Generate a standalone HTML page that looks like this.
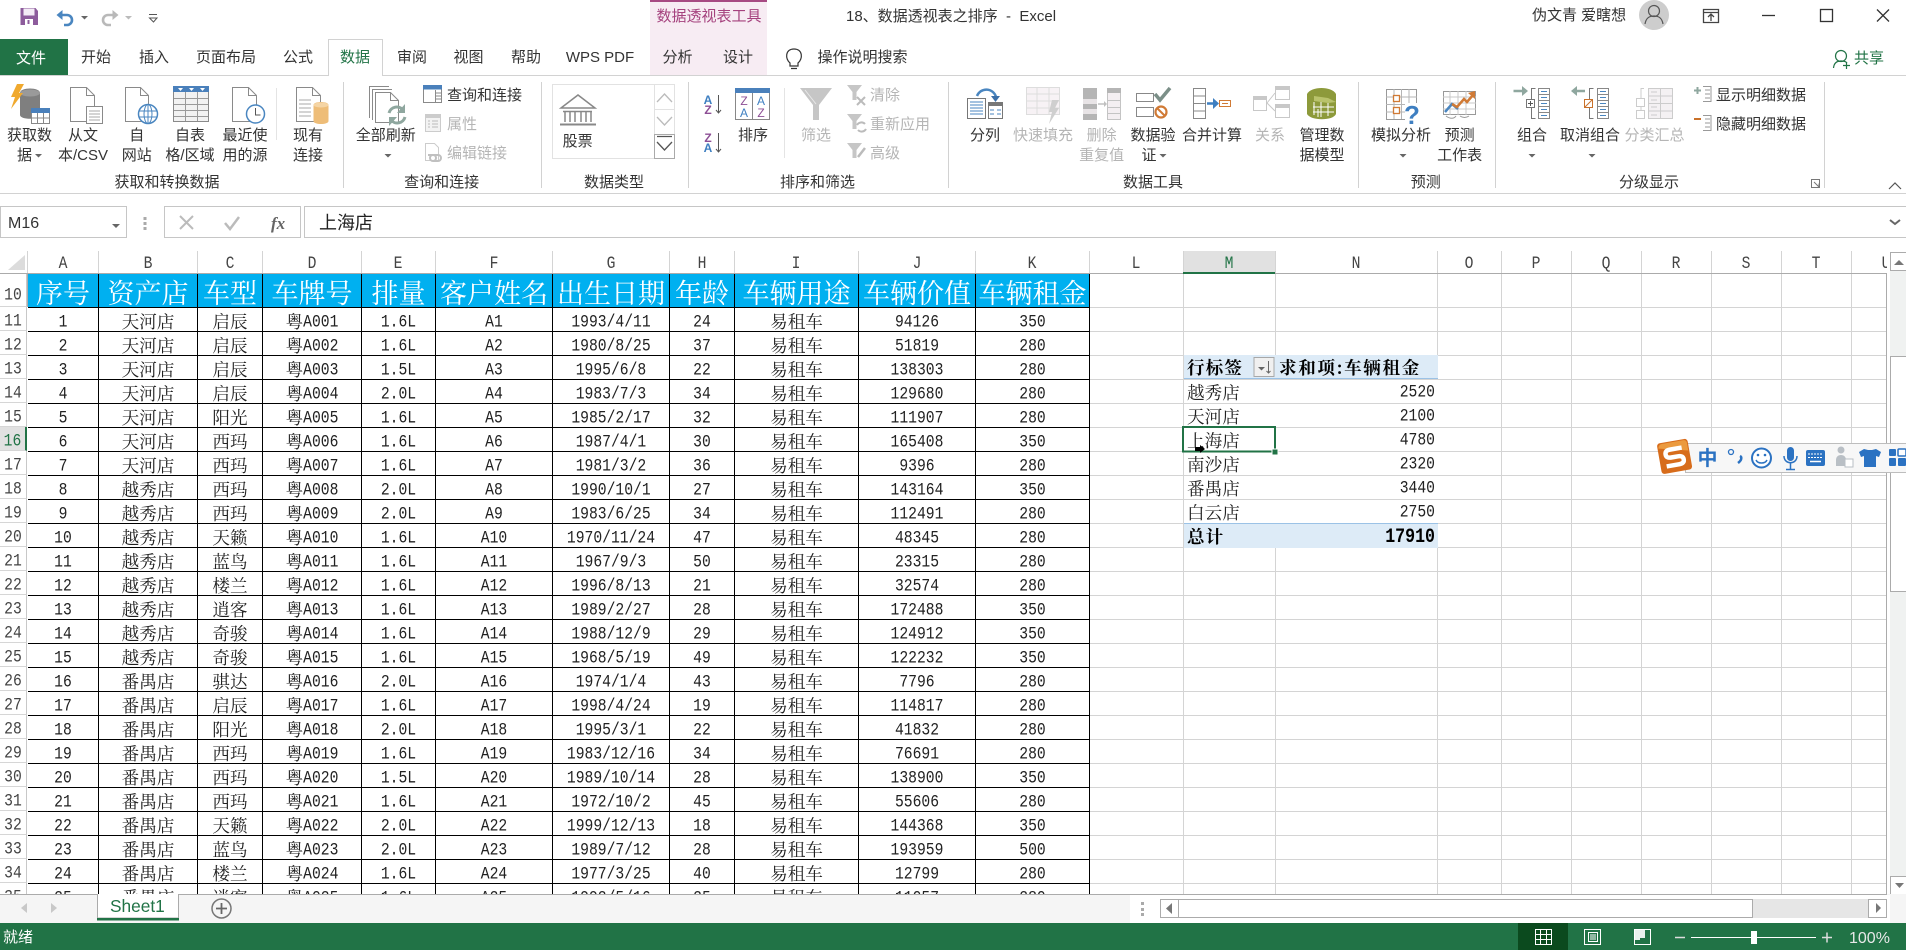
<!DOCTYPE html>
<html lang="zh"><head><meta charset="utf-8"><title>18、数据透视表之排序 - Excel</title>
<style>
html,body{margin:0;padding:0;background:#fff;width:1906px;height:950px;overflow:hidden}
#s{position:absolute;left:28px;top:273px;width:1062px;height:621px;overflow:hidden}
table{border-collapse:separate;border-spacing:0;table-layout:fixed;width:1062px;font-family:"Noto Serif CJK SC","Liberation Serif",serif;font-size:17.6px;color:#222}
td{box-sizing:border-box;height:24px;line-height:20px;padding:3px 0 0;border-right:1px solid #000;border-bottom:1px solid #000;text-align:center;white-space:nowrap;overflow:hidden}
tr.h td{height:34px;line-height:30px;padding:4px 0 0;background:#00B0F0;color:#fff;font-size:27px}
td span{position:relative;top:1px}
u{text-decoration:none;display:inline-block;vertical-align:top;height:20px;line-height:20px;position:relative;top:2px;font-family:"Liberation Mono",monospace;font-size:14.7px;transform:scaleY(1.22)}
.mono{display:inline-block;font-family:"Liberation Mono",monospace;font-size:14.7px;transform:scaleY(1.22);line-height:20px}
#rh{position:absolute;left:0;top:273px;width:27px;height:621px;overflow:hidden;font-family:"Liberation Mono",monospace;font-size:14.7px;color:#444}
#rh div{height:23px;line-height:25px;border-bottom:1px solid #d6d6d6;border-right:1px solid #c8c8c8;text-align:center;box-sizing:content-box;width:26px}
#rh div span{display:inline-block;transform:scaleY(1.22);position:relative;top:3px}
.p{position:absolute;height:24px;line-height:25px;font-family:"Noto Serif CJK SC","Liberation Serif",serif;font-size:17.6px;color:#222;white-space:nowrap;box-sizing:border-box}
.w{background:#fff;border-bottom:1px solid #d4d4d4}
.b{background:#DDEBF7;color:#000;font-weight:700}
svg text{font-family:"Liberation Sans","Noto Sans CJK SC",sans-serif;font-size:15px;fill:#333}
svg .g{fill:#b5b5b5}
</style></head><body>

<svg style="position:absolute;left:0;top:0" width="1906" height="950">
<path stroke="#d4d4d4" stroke-width="1" fill="none" d="M1089 307.5H1887M1089 331.5H1887M1089 355.5H1887M1089 379.5H1887M1089 403.5H1887M1089 427.5H1887M1089 451.5H1887M1089 475.5H1887M1089 499.5H1887M1089 523.5H1887M1089 547.5H1887M1089 571.5H1887M1089 595.5H1887M1089 619.5H1887M1089 643.5H1887M1089 667.5H1887M1089 691.5H1887M1089 715.5H1887M1089 739.5H1887M1089 763.5H1887M1089 787.5H1887M1089 811.5H1887M1089 835.5H1887M1089 859.5H1887M1089 883.5H1887M1183.5 273V894M1275.5 273V894M1437.5 273V894M1501.5 273V894M1571.5 273V894M1641.5 273V894M1711.5 273V894M1781.5 273V894M1851.5 273V894"/>
</svg>

<div id="rh"><div style="height:33px;line-height:40px"><span>10</span></div><div><span>11</span></div><div><span>12</span></div><div><span>13</span></div><div><span>14</span></div><div><span>15</span></div><div style="background:#e1e1e1;color:#217346;border-right:2px solid #217346;width:25px"><span>16</span></div><div><span>17</span></div><div><span>18</span></div><div><span>19</span></div><div><span>20</span></div><div><span>21</span></div><div><span>22</span></div><div><span>23</span></div><div><span>24</span></div><div><span>25</span></div><div><span>26</span></div><div><span>27</span></div><div><span>28</span></div><div><span>29</span></div><div><span>30</span></div><div><span>31</span></div><div><span>32</span></div><div><span>33</span></div><div><span>34</span></div><div><span>35</span></div></div>

<div id="s"><table>
<colgroup><col style="width:71px"><col style="width:99px"><col style="width:65px"><col style="width:99px"><col style="width:74px"><col style="width:117px"><col style="width:117px"><col style="width:65px"><col style="width:124px"><col style="width:117px"><col style="width:114px"></colgroup>
<tr class="h"><td>序号</td><td>资产店</td><td>车型</td><td>车牌号</td><td>排量</td><td>客户姓名</td><td>出生日期</td><td>年龄</td><td>车辆用途</td><td>车辆价值</td><td>车辆租金</td></tr>
<tr><td><u>1</u></td><td><span>天河店</span></td><td><span>启辰</span></td><td><span>粤</span><u>A001</u></td><td><u>1.6L</u></td><td><u>A1</u></td><td><u>1993/4/11</u></td><td><u>24</u></td><td><span>易租车</span></td><td><u>94126</u></td><td><u>350</u></td></tr>
<tr><td><u>2</u></td><td><span>天河店</span></td><td><span>启辰</span></td><td><span>粤</span><u>A002</u></td><td><u>1.6L</u></td><td><u>A2</u></td><td><u>1980/8/25</u></td><td><u>37</u></td><td><span>易租车</span></td><td><u>51819</u></td><td><u>280</u></td></tr>
<tr><td><u>3</u></td><td><span>天河店</span></td><td><span>启辰</span></td><td><span>粤</span><u>A003</u></td><td><u>1.5L</u></td><td><u>A3</u></td><td><u>1995/6/8</u></td><td><u>22</u></td><td><span>易租车</span></td><td><u>138303</u></td><td><u>280</u></td></tr>
<tr><td><u>4</u></td><td><span>天河店</span></td><td><span>启辰</span></td><td><span>粤</span><u>A004</u></td><td><u>2.0L</u></td><td><u>A4</u></td><td><u>1983/7/3</u></td><td><u>34</u></td><td><span>易租车</span></td><td><u>129680</u></td><td><u>280</u></td></tr>
<tr><td><u>5</u></td><td><span>天河店</span></td><td><span>阳光</span></td><td><span>粤</span><u>A005</u></td><td><u>1.6L</u></td><td><u>A5</u></td><td><u>1985/2/17</u></td><td><u>32</u></td><td><span>易租车</span></td><td><u>111907</u></td><td><u>280</u></td></tr>
<tr><td><u>6</u></td><td><span>天河店</span></td><td><span>西玛</span></td><td><span>粤</span><u>A006</u></td><td><u>1.6L</u></td><td><u>A6</u></td><td><u>1987/4/1</u></td><td><u>30</u></td><td><span>易租车</span></td><td><u>165408</u></td><td><u>350</u></td></tr>
<tr><td><u>7</u></td><td><span>天河店</span></td><td><span>西玛</span></td><td><span>粤</span><u>A007</u></td><td><u>1.6L</u></td><td><u>A7</u></td><td><u>1981/3/2</u></td><td><u>36</u></td><td><span>易租车</span></td><td><u>9396</u></td><td><u>280</u></td></tr>
<tr><td><u>8</u></td><td><span>越秀店</span></td><td><span>西玛</span></td><td><span>粤</span><u>A008</u></td><td><u>2.0L</u></td><td><u>A8</u></td><td><u>1990/10/1</u></td><td><u>27</u></td><td><span>易租车</span></td><td><u>143164</u></td><td><u>350</u></td></tr>
<tr><td><u>9</u></td><td><span>越秀店</span></td><td><span>西玛</span></td><td><span>粤</span><u>A009</u></td><td><u>2.0L</u></td><td><u>A9</u></td><td><u>1983/6/25</u></td><td><u>34</u></td><td><span>易租车</span></td><td><u>112491</u></td><td><u>280</u></td></tr>
<tr><td><u>10</u></td><td><span>越秀店</span></td><td><span>天籁</span></td><td><span>粤</span><u>A010</u></td><td><u>1.6L</u></td><td><u>A10</u></td><td><u>1970/11/24</u></td><td><u>47</u></td><td><span>易租车</span></td><td><u>48345</u></td><td><u>280</u></td></tr>
<tr><td><u>11</u></td><td><span>越秀店</span></td><td><span>蓝鸟</span></td><td><span>粤</span><u>A011</u></td><td><u>1.6L</u></td><td><u>A11</u></td><td><u>1967/9/3</u></td><td><u>50</u></td><td><span>易租车</span></td><td><u>23315</u></td><td><u>280</u></td></tr>
<tr><td><u>12</u></td><td><span>越秀店</span></td><td><span>楼兰</span></td><td><span>粤</span><u>A012</u></td><td><u>1.6L</u></td><td><u>A12</u></td><td><u>1996/8/13</u></td><td><u>21</u></td><td><span>易租车</span></td><td><u>32574</u></td><td><u>280</u></td></tr>
<tr><td><u>13</u></td><td><span>越秀店</span></td><td><span>逍客</span></td><td><span>粤</span><u>A013</u></td><td><u>1.6L</u></td><td><u>A13</u></td><td><u>1989/2/27</u></td><td><u>28</u></td><td><span>易租车</span></td><td><u>172488</u></td><td><u>350</u></td></tr>
<tr><td><u>14</u></td><td><span>越秀店</span></td><td><span>奇骏</span></td><td><span>粤</span><u>A014</u></td><td><u>1.6L</u></td><td><u>A14</u></td><td><u>1988/12/9</u></td><td><u>29</u></td><td><span>易租车</span></td><td><u>124912</u></td><td><u>350</u></td></tr>
<tr><td><u>15</u></td><td><span>越秀店</span></td><td><span>奇骏</span></td><td><span>粤</span><u>A015</u></td><td><u>1.6L</u></td><td><u>A15</u></td><td><u>1968/5/19</u></td><td><u>49</u></td><td><span>易租车</span></td><td><u>122232</u></td><td><u>350</u></td></tr>
<tr><td><u>16</u></td><td><span>番禺店</span></td><td><span>骐达</span></td><td><span>粤</span><u>A016</u></td><td><u>2.0L</u></td><td><u>A16</u></td><td><u>1974/1/4</u></td><td><u>43</u></td><td><span>易租车</span></td><td><u>7796</u></td><td><u>280</u></td></tr>
<tr><td><u>17</u></td><td><span>番禺店</span></td><td><span>启辰</span></td><td><span>粤</span><u>A017</u></td><td><u>1.6L</u></td><td><u>A17</u></td><td><u>1998/4/24</u></td><td><u>19</u></td><td><span>易租车</span></td><td><u>114817</u></td><td><u>280</u></td></tr>
<tr><td><u>18</u></td><td><span>番禺店</span></td><td><span>阳光</span></td><td><span>粤</span><u>A018</u></td><td><u>2.0L</u></td><td><u>A18</u></td><td><u>1995/3/1</u></td><td><u>22</u></td><td><span>易租车</span></td><td><u>41832</u></td><td><u>280</u></td></tr>
<tr><td><u>19</u></td><td><span>番禺店</span></td><td><span>西玛</span></td><td><span>粤</span><u>A019</u></td><td><u>1.6L</u></td><td><u>A19</u></td><td><u>1983/12/16</u></td><td><u>34</u></td><td><span>易租车</span></td><td><u>76691</u></td><td><u>280</u></td></tr>
<tr><td><u>20</u></td><td><span>番禺店</span></td><td><span>西玛</span></td><td><span>粤</span><u>A020</u></td><td><u>1.5L</u></td><td><u>A20</u></td><td><u>1989/10/14</u></td><td><u>28</u></td><td><span>易租车</span></td><td><u>138900</u></td><td><u>350</u></td></tr>
<tr><td><u>21</u></td><td><span>番禺店</span></td><td><span>西玛</span></td><td><span>粤</span><u>A021</u></td><td><u>1.6L</u></td><td><u>A21</u></td><td><u>1972/10/2</u></td><td><u>45</u></td><td><span>易租车</span></td><td><u>55606</u></td><td><u>280</u></td></tr>
<tr><td><u>22</u></td><td><span>番禺店</span></td><td><span>天籁</span></td><td><span>粤</span><u>A022</u></td><td><u>2.0L</u></td><td><u>A22</u></td><td><u>1999/12/13</u></td><td><u>18</u></td><td><span>易租车</span></td><td><u>144368</u></td><td><u>350</u></td></tr>
<tr><td><u>23</u></td><td><span>番禺店</span></td><td><span>蓝鸟</span></td><td><span>粤</span><u>A023</u></td><td><u>2.0L</u></td><td><u>A23</u></td><td><u>1989/7/12</u></td><td><u>28</u></td><td><span>易租车</span></td><td><u>193959</u></td><td><u>500</u></td></tr>
<tr><td><u>24</u></td><td><span>番禺店</span></td><td><span>楼兰</span></td><td><span>粤</span><u>A024</u></td><td><u>1.6L</u></td><td><u>A24</u></td><td><u>1977/3/25</u></td><td><u>40</u></td><td><span>易租车</span></td><td><u>12799</u></td><td><u>280</u></td></tr>
<tr><td><u>25</u></td><td><span>番禺店</span></td><td><span>逍客</span></td><td><span>粤</span><u>A025</u></td><td><u>1.6L</u></td><td><u>A25</u></td><td><u>1992/5/16</u></td><td><u>25</u></td><td><span>易租车</span></td><td><u>11057</u></td><td><u>280</u></td></tr>
</table></div>

<!-- pivot -->
<div class="p b" style="left:1184px;top:355px;width:92px;padding-left:3px;letter-spacing:1px;border-bottom:1px solid #9BC2E6">行标签</div>
<div class="p b" style="left:1276px;top:355px;width:162px;padding-left:3px;letter-spacing:1.6px;border-bottom:1px solid #9BC2E6">求和项:车辆租金</div>
<div class="p w" style="left:1184px;top:380px;width:254px;padding-left:3px">越秀店<span class="mono" style="position:absolute;right:3px;top:3px">2520</span></div>
<div class="p w" style="left:1184px;top:404px;width:254px;padding-left:3px">天河店<span class="mono" style="position:absolute;right:3px;top:3px">2100</span></div>
<div class="p w" style="left:1184px;top:428px;width:254px;padding-left:3px">上海店<span class="mono" style="position:absolute;right:3px;top:3px">4780</span></div>
<div class="p w" style="left:1184px;top:452px;width:254px;padding-left:3px">南沙店<span class="mono" style="position:absolute;right:3px;top:3px">2320</span></div>
<div class="p w" style="left:1184px;top:476px;width:254px;padding-left:3px">番禺店<span class="mono" style="position:absolute;right:3px;top:3px">3440</span></div>
<div class="p w" style="left:1184px;top:500px;width:254px;padding-left:3px">白云店<span class="mono" style="position:absolute;right:3px;top:3px">2750</span></div>
<div class="p b" style="left:1184px;top:523px;width:254px;height:25px;padding-left:3px;letter-spacing:1px;border-top:1px solid #9BC2E6">总计<span class="mono" style="position:absolute;right:3px;top:3px;font-weight:700;font-size:16.6px;letter-spacing:0">17910</span></div>

<svg style="position:absolute;left:0;top:0" width="1906" height="950" xmlns="http://www.w3.org/2000/svg">
<!-- pivot filter + selection -->
<rect x="1254" y="357.5" width="20" height="19" fill="#f0f0f0" stroke="#a8a8a8"/><path d="M1258 367h7l-3.500 3.500z" fill="#666"/><path d="M1268.500 361v12M1266.500 371l2 2 2-2" stroke="#666" fill="none"/>
<rect x="1183" y="427" width="92" height="24.500" fill="none" stroke="#217346" stroke-width="2"/><rect x="1272" y="449" width="6" height="6" fill="#217346" stroke="#fff"/>
<path d="M1195 447h5v-2l5 4-5 4v-2h-5z" fill="#000"/>

<!-- column headers -->
<rect x="0" y="250" width="1887" height="23" fill="#fff"/>
<path d="M25 255v15H8z" fill="#dcdcdc"/>
<rect x="1183" y="251" width="92" height="22" fill="#e1e1e1"/>
<path stroke="#d4d4d4" d="M27.500 251v22M98.500 251v22M197.500 251v22M262.500 251v22M361.500 251v22M435.500 251v22M552.500 251v22M669.500 251v22M734.500 251v22M858.500 251v22M975.500 251v22M1089.500 251v22M1183.500 251v22M1275.500 251v22M1437.500 251v22M1501.500 251v22M1571.500 251v22M1641.500 251v22M1711.500 251v22M1781.500 251v22M1851.500 251v22"/>
<path stroke="#ababab" d="M0 273.500H1183M1275 273.500H1887M1886.500 273V894M27.500 273V307"/>
<rect x="1183" y="272" width="92" height="2" fill="#217346"/>
<g text-anchor="middle" transform="translate(0,268) scale(1,1.22)">
<text x="63" y="0" style="font:14.7px 'Liberation Mono',monospace;fill:#444">A</text><text x="148" y="0" style="font:14.7px 'Liberation Mono',monospace;fill:#444">B</text><text x="230" y="0" style="font:14.7px 'Liberation Mono',monospace;fill:#444">C</text><text x="312" y="0" style="font:14.7px 'Liberation Mono',monospace;fill:#444">D</text><text x="398" y="0" style="font:14.7px 'Liberation Mono',monospace;fill:#444">E</text><text x="494" y="0" style="font:14.7px 'Liberation Mono',monospace;fill:#444">F</text><text x="611" y="0" style="font:14.7px 'Liberation Mono',monospace;fill:#444">G</text><text x="702" y="0" style="font:14.7px 'Liberation Mono',monospace;fill:#444">H</text><text x="796" y="0" style="font:14.7px 'Liberation Mono',monospace;fill:#444">I</text><text x="917" y="0" style="font:14.7px 'Liberation Mono',monospace;fill:#444">J</text><text x="1032" y="0" style="font:14.7px 'Liberation Mono',monospace;fill:#444">K</text><text x="1136" y="0" style="font:14.7px 'Liberation Mono',monospace;fill:#444">L</text><text x="1229" y="0" style="font:14.7px 'Liberation Mono',monospace;fill:#217346">M</text><text x="1356" y="0" style="font:14.7px 'Liberation Mono',monospace;fill:#444">N</text><text x="1469" y="0" style="font:14.7px 'Liberation Mono',monospace;fill:#444">O</text><text x="1536" y="0" style="font:14.7px 'Liberation Mono',monospace;fill:#444">P</text><text x="1606" y="0" style="font:14.7px 'Liberation Mono',monospace;fill:#444">Q</text><text x="1676" y="0" style="font:14.7px 'Liberation Mono',monospace;fill:#444">R</text><text x="1746" y="0" style="font:14.7px 'Liberation Mono',monospace;fill:#444">S</text><text x="1816" y="0" style="font:14.7px 'Liberation Mono',monospace;fill:#444">T</text><text x="1886" y="0" style="font:14.7px 'Liberation Mono',monospace;fill:#444">U</text>
</g>
<rect x="1887" y="250" width="19" height="24" fill="#fff"/>

<!-- right vertical scrollbar -->
<rect x="1890" y="270" width="16" height="606" fill="#f0f2f1"/>
<rect x="1890.500" y="252.500" width="16" height="18" fill="#fff" stroke="#ababab"/><path d="M1894 265l5-5 5 5z" fill="#777"/>
<rect x="1890.500" y="356.500" width="16" height="235" fill="#fff" stroke="#ababab"/>
<rect x="1890.500" y="876.500" width="16" height="18" fill="#fff" stroke="#ababab"/><path d="M1895 883h9l-4.500 5z" fill="#777"/>

<!-- sheet tabs / horizontal scrollbar -->
<rect x="0" y="894" width="1906" height="29" fill="#f5f5f5"/>
<path d="M0 894.500H1887" stroke="#ababab"/>
<path d="M27 903v10l-6-5z" fill="#c8c8c8"/><path d="M51 903v10l6-5z" fill="#c8c8c8"/>
<path d="M97.500 894v24h81v-24" fill="#fff" stroke="#ababab"/><rect x="97" y="918" width="82" height="2.500" fill="#217346"/>
<text x="110" y="912" style="font-size:17.300px;fill:#217346">Sheet1</text>
<circle cx="221.500" cy="908.500" r="9.500" fill="none" stroke="#777" stroke-width="1.500"/><path d="M216 908.500h11M221.500 903v11" stroke="#666" stroke-width="1.800"/>
<rect x="1130" y="895" width="757" height="28" fill="#fff"/><rect x="1120" y="895" width="10" height="28" fill="#f5f5f5"/>
<rect x="1141" y="902" width="3" height="3" fill="#aaa"/><rect x="1141" y="908" width="3" height="3" fill="#aaa"/><rect x="1141" y="913" width="3" height="3" fill="#aaa"/>
<rect x="1160.500" y="899.500" width="18" height="18" fill="#fff" stroke="#ababab"/><path d="M1172 903v11l-6-5.500z" fill="#777"/>
<rect x="1178.500" y="899.500" width="574" height="18" fill="#fff" stroke="#ababab"/><rect x="1753" y="899" width="115" height="19" fill="#e6e6e6"/>
<rect x="1868.500" y="899.500" width="18" height="18" fill="#fff" stroke="#ababab"/><path d="M1876 903v10l5-5z" fill="#777"/>
<rect x="1887" y="895" width="3" height="28" fill="#fff"/>

<!-- status bar -->
<rect x="0" y="923" width="1906" height="27" fill="#217346"/>
<text x="3" y="942" style="fill:#fff;font-size:15px">就绪</text>
<rect x="1518" y="923" width="50" height="27" fill="#0b4a1e"/>
<path fill="none" stroke="#fff" d="M1535.500 929.500h16v15h-16zM1535.500 934.500h16M1535.500 939.500h16M1540.500 929.500v15M1546.500 929.500v15"/>
<path fill="none" stroke="#fff" d="M1584.500 929.500h16v15h-16zM1588.500 932.500h9v9h-9zM1590 935h6M1590 937h6M1590 939h6"/>
<path fill="none" stroke="#fff" d="M1634.500 929.500h16v15h-16z"/><path fill="#fff" d="M1635 930h5v10h-5zM1640 930h5v8h-5z" opacity=".9"/>
<path stroke="#ddd" stroke-width="1.500" d="M1675 937.500h10"/><path stroke="#fff" d="M1691 937.500h125"/><rect x="1751" y="931" width="6" height="13" fill="#fff"/><path stroke="#ddd" stroke-width="1.500" d="M1822 937.500h10M1827 932.500v10"/>
<text x="1849" y="943" style="fill:#e8e8e8;font-size:16px">100%</text>

<!-- title / context tab -->
<rect x="650" y="0" width="117" height="76" fill="#f7ecf3"/><rect x="650" y="0" width="117" height="2" fill="#a74a83"/>
<text x="709" y="21" text-anchor="middle" style="fill:#a5427e">数据透视表工具</text>
<text x="846" y="21">18、数据透视表之排序&#160;&#160;-&#160;&#160;Excel</text>
<text x="1532" y="20">伪文青 爱瞎想</text>
<circle cx="1654" cy="15" r="15" fill="#cdcdcd"/><circle cx="1654" cy="11" r="5.500" fill="none" stroke="#555" stroke-width="1.200"/><path d="M1645 24c1-6 4-8 9-8s8 2 9 8" fill="none" stroke="#555" stroke-width="1.200"/>
<path fill="none" stroke="#444" stroke-width="1.300" d="M1703.500 9.500h15v13h-15zM1703.500 12.500h15M1711 21v-6M1708 17l3-3 3 3"/>
<path stroke="#333" stroke-width="1.300" d="M1762 15.500h13"/><rect x="1820.500" y="9.500" width="12" height="12" fill="none" stroke="#333" stroke-width="1.300"/><path stroke="#333" stroke-width="1.300" d="M1877 9.500l12 12M1889 9.500l-12 12"/>

<!-- QAT -->
<path fill="#8d5c9c" d="M20.500 8h15l2.500 3v14H20.500z"/><rect x="23.500" y="8.500" width="11" height="7" fill="#f4ecf6"/><rect x="25" y="19" width="8" height="6" fill="#fff"/><rect x="27.500" y="20" width="2" height="4" fill="#8d5c9c"/>
<path fill="none" stroke="#4a86c0" stroke-width="2.600" d="M60 15h7a5 5 0 0 1 0 10h-3"/><path d="M56.500 15l6-5v10z" fill="#4a86c0"/><path d="M81 16h7l-3.500 3.500z" fill="#666"/>
<path fill="none" stroke="#b9b9b9" stroke-width="2.600" d="M115 15h-7a5 5 0 0 0 0 10h3"/><path d="M118.500 15l-6-5v10z" fill="#b9b9b9"/><path d="M125 16h7l-3.500 3.500z" fill="#bbb"/>
<path d="M149 14.500h8M149.500 18h7.500l-3.500 4z" fill="none" stroke="#555"/>

<!-- tabs -->
<rect x="0" y="39" width="68" height="37" fill="#217346"/>
<text x="31" y="63" text-anchor="middle" style="fill:#fff">文件</text>
<path d="M0 75.500H328.500V39.500H382.500V75.500H1906" fill="none" stroke="#d2d2d2"/><rect x="329" y="74" width="53" height="3" fill="#fff"/>
<g text-anchor="middle">
<text x="96" y="62">开始</text><text x="154" y="62">插入</text><text x="226" y="62">页面布局</text><text x="298" y="62">公式</text>
<text x="355" y="62" style="fill:#217346">数据</text><text x="412" y="62">审阅</text><text x="468.500" y="62">视图</text><text x="526" y="62">帮助</text><text x="600" y="62">WPS PDF</text><text x="677.500" y="62">分析</text><text x="738" y="62">设计</text>
</g>
<path fill="none" stroke="#333" stroke-width="1.200" d="M790 66v-3c-5-4-5-14 4-14s9 10 4 14v3zM791 68.500h6"/>
<text x="817.500" y="62">操作说明搜索</text>
<circle cx="1841" cy="56" r="5.500" fill="none" stroke="#217346" stroke-width="1.200"/><path fill="none" stroke="#217346" stroke-width="1.200" d="M1833.500 68c.5-5 3-7 7.500-7s5 1 6 2M1846.500 62v7M1843 65.500h7"/>
<text x="1854" y="63" style="fill:#217346">共享</text>

<!-- ribbon frame -->
<path stroke="#d2d2d2" d="M0 193.500H1906M343.500 82v106M541.500 82v106M688.500 82v106M948.500 82v106M1358.500 82v106M1495.500 82v106M1824.500 82v106"/><path stroke="#e4e4e4" d="M276.500 88v52M784.500 88v70"/>

<!-- data type box (before text) -->
<rect x="552.500" y="84.500" width="122" height="74" fill="#fff" stroke="#e2e2e2"/>

<!-- ribbon text -->
<g text-anchor="middle">
<text x="29.500" y="140">获取数</text><text x="24.500" y="160">据</text><text x="83" y="140">从文</text><text x="83" y="160">本/CSV</text><text x="136.700" y="140">自</text><text x="136.700" y="160">网站</text><text x="190" y="140">自表</text><text x="190" y="160">格/区域</text><text x="245" y="140">最近使</text><text x="245" y="160">用的源</text><text x="308" y="140">现有</text><text x="308" y="160">连接</text>
<text x="385.700" y="140">全部刷新</text><text x="577.600" y="146">股票</text><text x="753" y="140">排序</text><text x="816" y="140" class="g">筛选</text>
<text x="985" y="140">分列</text><text x="1043" y="140" class="g">快速填充</text><text x="1101.600" y="140" class="g">删除</text><text x="1101.600" y="160" class="g">重复值</text><text x="1153" y="140">数据验</text><text x="1149" y="160">证</text><text x="1212" y="140">合并计算</text><text x="1270" y="140" class="g">关系</text><text x="1322" y="140">管理数</text><text x="1322" y="160">据模型</text>
<text x="1401" y="140">模拟分析</text><text x="1459.600" y="140">预测</text><text x="1459.600" y="160">工作表</text><text x="1532" y="140">组合</text><text x="1590" y="140">取消组合</text><text x="1654.500" y="140" class="g">分类汇总</text>
<text x="167" y="187">获取和转换数据</text><text x="441.600" y="187">查询和连接</text><text x="614" y="187">数据类型</text><text x="817.500" y="187">排序和筛选</text><text x="1153" y="187">数据工具</text><text x="1425.700" y="187">预测</text><text x="1649" y="187">分级显示</text>
</g>
<text x="447" y="100">查询和连接</text><text x="447" y="129" class="g">属性</text><text x="447" y="158" class="g">编辑链接</text>
<text x="870" y="100" class="g">清除</text><text x="870" y="129" class="g">重新应用</text><text x="870" y="158" class="g">高级</text>
<text x="1716" y="100">显示明细数据</text><text x="1716" y="129">隐藏明细数据</text>
<path fill="#666" d="M35 154h7l-3.500 3.500zM384.500 154h7l-3.500 3.500zM1159.500 154h7l-3.500 3.500zM1399.500 154h7l-3.500 3.500zM1528.500 154h7l-3.500 3.500zM1588.500 154h7l-3.500 3.500z"/>
<path fill="none" stroke="#777" d="M1811.500 179.500h8v8h-8zM1814 182l5 5M1819 183.500v4h-4"/>
<path fill="none" stroke="#555" stroke-width="1.200" d="M1889 189l6-6 6 6"/>

<!-- ribbon icons -->
<g fill="none">
<!-- get data -->
<path d="M20 93c0-6 20-6 20 0v22c0 5-20 5-20 0z" fill="#7f7f7f"/><ellipse cx="30" cy="93" rx="10" ry="3.500" fill="#9a9a9a"/>
<path d="M17 84h7l-5 9h4l-12 16 4-12H11z" fill="#f0a92e"/>
<rect x="31.500" y="108.500" width="18" height="15" fill="#fff" stroke="#888"/><rect x="31" y="108" width="19" height="5" fill="#4a80bb"/><path stroke="#888" d="M37.500 113v10M43.500 113v10M32 118h17"/>
<!-- from text -->
<path stroke="#8a8a8a" fill="#fff" d="M70.500 87.500h16l8 8v26h-24zM86.500 87.500v8h8"/><rect x="86.500" y="106.500" width="16" height="17" fill="#fff" stroke="#8a8a8a"/><path stroke="#aaa" d="M89 111h11M89 114h11M89 117h11M89 120h11"/>
<!-- web -->
<path stroke="#8a8a8a" fill="#fff" d="M125.500 87.500h15l8 8v26h-23zM140.500 87.500v8h8"/><circle cx="148" cy="114" r="9.500" fill="#fff" stroke="#4a86c0" stroke-width="1.500"/><ellipse cx="148" cy="114" rx="4" ry="9.500" stroke="#4a86c0"/><path stroke="#4a86c0" d="M139 111h18M139 117h18M148 105v18"/>
<!-- table -->
<rect x="173.500" y="86.500" width="35" height="35" fill="#f2f2f2" stroke="#8a8a8a"/><rect x="173" y="86" width="36" height="6" fill="#4a80bb"/><path stroke="#9a9a9a" d="M185.500 92v29M197.500 92v29M174 98.500h34M174 104.500h34M174 110.500h34M174 116.500h34"/><path fill="#fff" d="M178 88h5l-2.500 3zM189 88h5l-2.500 3zM200 88h5l-2.500 3z"/>
<!-- recent -->
<path stroke="#8a8a8a" fill="#fff" d="M232.500 87.500h16l8 8v26h-24zM248.500 87.500v8h8"/><circle cx="255.500" cy="114" r="9" fill="#fff" stroke="#4a86c0" stroke-width="1.500"/><path stroke="#555" d="M255.500 108v7h5"/>
<!-- existing -->
<path stroke="#8a8a8a" fill="#fff" d="M296.500 87.500h16l8 8v26h-24zM312.500 87.500v8h8"/><path stroke="#aaa" d="M299 100h12M299 104h12M299 108h12M299 112h12M299 116h12"/><path d="M313.500 105c0-4 15-4 15 0v16c0 4-15 4-15 0z" fill="#eebd78"/><ellipse cx="321" cy="105" rx="7.500" ry="2.500" fill="#f5d5a5"/>
<!-- refresh all -->
<path stroke="#8a8a8a" d="M369.500 118V86.500H389M372.500 120V89.500H392M375.500 92.500h15l8 8v22h-23z" fill="#fff"/><path stroke="#8a8a8a" d="M390.500 92.500v8h8"/>
<path stroke="#8fa79f" stroke-width="3" d="M389 113a8 8 0 0 1 14-3M405 117a8 8 0 0 1-14 3"/><path fill="#8fa79f" d="M405 104v9h-8zM389 126v-9h8z"/>
<!-- small queries -->
<rect x="423.500" y="85.500" width="18" height="17" fill="#fff" stroke="#8a8a8a"/><rect x="423" y="85" width="19" height="4.500" fill="#4a80bb"/><path stroke="#8a8a8a" d="M435.500 90v12M436 93h5M436 96h5M436 99h5"/>
<rect x="425.500" y="114.500" width="15" height="17" fill="#f3f3f3" stroke="#ccc"/><rect x="425" y="114" width="16" height="4" fill="#ccc"/><path stroke="#bbb" d="M428 121h2M432 121h6M428 124h2M432 124h6M428 127h2M432 127h6"/>
<path stroke="#ccc" fill="#fff" d="M425.500 143.500h9l4 4v13h-13z"/><path stroke="#c0c0c0" stroke-width="2" d="M433 155h5a3 3 0 0 1 0 6h-5a3 3 0 0 1 0-6M428 155h5a3 3 0 0 1 0 6"/>
<!-- stock bank -->
<path stroke="#888" stroke-width="1.500" d="M561 108l17-13 17 13z"/><path stroke="#888" stroke-width="1.500" d="M563 111.500h29M565 112v10M570 112v10M575 112v10M581 112v10M586 112v10M591 112v10"/><path stroke="#888" stroke-width="2" d="M560 124.500h36"/>
<rect x="654.500" y="84.500" width="20" height="25" fill="#fff" stroke="#e2e2e2"/><rect x="654.500" y="109.500" width="20" height="25" fill="#fff" stroke="#e2e2e2"/><rect x="654.500" y="134.500" width="20" height="24" fill="#fff" stroke="#aaa"/>
<path stroke="#bbb" stroke-width="1.300" d="M657 102l7.500-8 7.500 8M657 117l7.500 8 7.500-8"/><path stroke="#555" stroke-width="1.300" d="M657 136.500h15M657 142l7.500 8 7.500-8"/>
<!-- sort -->
<path stroke="#555" d="M718.500 95v18M716 110l2.500 3 2.500-3M718.500 133v19M716 149l2.500 3 2.500-3"/>
<rect x="735.500" y="88.500" width="34" height="31" fill="#fff" stroke="#888"/><rect x="735" y="88" width="35" height="5" fill="#4a80bb"/><path stroke="#888" d="M752.500 93v26"/>
<!-- filter -->
<path d="M800 88h32l-13 17v15h-6v-15z" fill="#c6c6c6"/><path d="M805 90l11 14" stroke="#e8e8e8"/>
<path d="M847 85h15l-5.500 7v8h-4v-8z" fill="#c6c6c6"/><path stroke="#bbb" stroke-width="2" d="M857 97l8 8M865 97l-8 8"/>
<path d="M847 114h15l-5.500 7v8h-4v-8z" fill="#c6c6c6"/><path stroke="#bbb" stroke-width="2" d="M857 125a5 5 0 0 1 8-1M866 129a5 5 0 0 1-8 1"/>
<path d="M847 143h15l-5.500 7v8h-4v-8z" fill="#c6c6c6"/><path stroke="#bbb" stroke-width="2.500" d="M865 148l-7 9"/>
<!-- text to columns -->
<path stroke="#4a86c0" stroke-width="2.500" d="M977 96a10 10 0 0 1 19 1"/><path fill="#3b6fa8" d="M991 96h9l-4.500 6z"/>
<rect x="967.500" y="98.500" width="18" height="20" fill="#fff" stroke="#777"/><path stroke="#4a86c0" d="M970 102h13M970 105h13M970 108h13M970 111h13M970 114h13"/>
<rect x="988.500" y="102.500" width="14" height="16" fill="#fff" stroke="#777"/><rect x="988" y="102" width="15" height="4" fill="#777"/><path stroke="#4a86c0" d="M990 110h4M997 110h4M990 114h4M997 114h4"/>
<!-- flash fill -->
<rect x="1026.500" y="87.500" width="33" height="27" fill="#f7f2f5" stroke="#ddd"/><path stroke="#ddd" d="M1026 94h34M1026 101h34M1026 108h34M1037 87v28M1049 87v28"/><path d="M1052 100h7l-4 8h4l-10 16 3-12h-3z" fill="#cfcfcf"/>
<!-- remove dup -->
<rect x="1083" y="88" width="14" height="32" fill="#b5b5b5"/><path fill="#e8e4e6" d="M1083 99h14v5h-14zM1083 109h14v5h-14z"/>
<rect x="1107.500" y="88.500" width="13" height="31" fill="#f4eff2" stroke="#c4c4c4"/><rect x="1107" y="88" width="14" height="5" fill="#b5b5b5"/><path stroke="#c4c4c4" d="M1107 100.500h14M1107 107.500h14M1107 113.500h14"/>
<path stroke="#c0c0c0" stroke-width="1.500" d="M1098 104h7"/><path fill="#c0c0c0" d="M1104 101v6l3-3z"/>
<!-- validation -->
<rect x="1136.500" y="93.500" width="17" height="8" fill="#fff" stroke="#888"/><rect x="1136.500" y="107.500" width="17" height="9" fill="#fff" stroke="#888"/><path stroke="#7b8f88" stroke-width="3.500" d="M1155 94l5 6 10-12"/><circle cx="1161" cy="112" r="5.500" fill="#fff" stroke="#d07a35" stroke-width="2.200"/><path stroke="#d07a35" stroke-width="2" d="M1157 108l8 8"/>
<!-- consolidate -->
<rect x="1193.500" y="88.500" width="12" height="30" fill="#fff" stroke="#888"/><path stroke="#888" d="M1193 96h13M1193 103.500h13M1193 111h13"/><path stroke="#3e7fc1" stroke-width="2.500" d="M1207 103.500h7"/><path fill="#3e7fc1" d="M1213 98v11l6-5.500z"/><rect x="1219.500" y="100.500" width="11" height="6" fill="#fff" stroke="#d07a35"/><path stroke="#d07a35" d="M1222 103.500h6"/>
<!-- relationships -->
<rect x="1253.500" y="96.500" width="13" height="14" fill="#fff" stroke="#c8c8c8"/><rect x="1253" y="96" width="14" height="4" fill="#c8c8c8"/><rect x="1275.500" y="86.500" width="14" height="13" fill="#fff" stroke="#c8c8c8"/><rect x="1275" y="86" width="15" height="4" fill="#c8c8c8"/><rect x="1275.500" y="104.500" width="14" height="13" fill="#fff" stroke="#c8c8c8"/><rect x="1275" y="104" width="15" height="4" fill="#c8c8c8"/><path stroke="#c8c8c8" d="M1267 103l8-10M1267 103l8 8"/>
<!-- data model -->
<path d="M1307 94c4-8 25-8 29 0v20c-3 7-25 7-29 0z" fill="#8d9a3b"/><path d="M1314 96l14 2 8 4-8 1-14-2z" fill="#b9c36c"/><path stroke="#fff" d="M1314 102v13M1321 102v15M1328 103v13M1313 107h21M1313 112h21"/><path stroke="#fff" d="M1318 109v8"/>
<!-- what-if -->
<rect x="1386.500" y="89.500" width="30" height="30" fill="#fff" stroke="#999"/><path stroke="#b5b5b5" d="M1386 97h31M1386 104.500h31M1386 112h31M1394 89v30M1401.500 89v30M1409 89v30"/><rect x="1393.500" y="95.500" width="6" height="6" fill="#fff" stroke="#d07a35" stroke-width="1.300"/><rect x="1393.500" y="107.500" width="6" height="6" fill="#fff" stroke="#d07a35" stroke-width="1.300"/>
<rect x="1405" y="103" width="15" height="23" fill="#fff"/>
<!-- forecast -->
<rect x="1443.500" y="91.500" width="32" height="23" fill="#fff" stroke="#999"/><path stroke="#c8c8c8" d="M1443 97h33M1443 103h33M1443 109h33M1450 91v24M1458 91v24M1466 91v24"/><path stroke="#4a86c0" stroke-width="2.500" d="M1445 112l7-8 6 5"/><path stroke="#d07a35" stroke-width="2.500" d="M1452 104l5 3 7-8 3 3 6-7"/><path fill="#d07a35" d="M1475 91v8l-7-6z"/><path stroke="#999" d="M1446 116c4 3 8 3 10 0M1460 116c3 2 6 2 9 0"/>
<!-- group -->
<path stroke="#8fa79f" stroke-width="2.500" d="M1513.500 91h10"/><path fill="#8fa79f" d="M1522 86v10l6-5z"/>
<path stroke="#777" d="M1535.500 88.500h-4v30h4"/><rect x="1526.500" y="99.500" width="8" height="8" fill="#fff" stroke="#777"/><path stroke="#555" d="M1528 103.500h5M1530.500 101v5"/>
<rect x="1538.500" y="88.500" width="11" height="30" fill="#fff" stroke="#888"/><path stroke="#888" d="M1538 94.500h12M1538 100.500h12M1538 106.500h12M1538 112.500h12"/><path stroke="#4a86c0" d="M1541 91.500h6M1541 97.500h6M1541 103.500h6M1541 109.500h6M1541 115.500h6"/>
<!-- ungroup -->
<path stroke="#8fa79f" stroke-width="2.500" d="M1575 91h10"/><path fill="#8fa79f" d="M1577 86v10l-6-5z"/>
<path stroke="#777" d="M1593.500 88.500h-4v30h4"/><rect x="1584.500" y="99.500" width="8" height="8" fill="#fff" stroke="#c9712a"/><path stroke="#c9712a" d="M1585 107l7-7"/>
<rect x="1597.500" y="88.500" width="11" height="30" fill="#fff" stroke="#888"/><path stroke="#888" d="M1597 94.500h12M1597 100.500h12M1597 106.500h12M1597 112.500h12"/><path stroke="#4a86c0" d="M1600 91.500h6M1600 97.500h6M1600 103.500h6M1600 109.500h6M1600 115.500h6"/>
<!-- subtotal -->
<path stroke="#ccc" d="M1644 88.500h-3v30h3"/><rect x="1636.500" y="98.500" width="8" height="8" fill="#fff" stroke="#ccc"/><rect x="1636.500" y="110.500" width="8" height="8" fill="#fff" stroke="#ccc"/><rect x="1648.500" y="88.500" width="24" height="30" fill="#f4f1f3" stroke="#ccc"/><path stroke="#ccc" d="M1648 96h25M1648 103.500h25M1648 111h25M1660.500 88v30M1651 92h6M1651 100h6M1651 107h6M1651 115h6"/>
<!-- detail -->
<path stroke="#8fa79f" stroke-width="2" d="M1694 90.500h7M1697.500 87v7"/><path stroke="#999" d="M1703 86.500h8v15h-8M1705 90h5M1705 94h5M1705 98h5"/>
<path stroke="#c9712a" stroke-width="2" d="M1694 119h7"/><path stroke="#999" d="M1703 115.500h8v15h-8M1705 119h5M1705 123h5M1705 127h5"/>
</g>
<text x="708" y="104" text-anchor="middle" style="font-size:12px;fill:#3e7fc1;font-weight:700">A</text><text x="708" y="114" text-anchor="middle" style="font-size:12px;fill:#8d4f95;font-weight:700">Z</text>
<text x="708" y="142" text-anchor="middle" style="font-size:12px;fill:#8d4f95;font-weight:700">Z</text><text x="708" y="152" text-anchor="middle" style="font-size:12px;fill:#3e7fc1;font-weight:700">A</text>
<text x="744" y="105" text-anchor="middle" style="font-size:12px;fill:#8d4f95">Z</text><text x="744" y="117" text-anchor="middle" style="font-size:12px;fill:#3e7fc1">A</text><text x="761" y="105" text-anchor="middle" style="font-size:12px;fill:#3e7fc1">A</text><text x="761" y="117" text-anchor="middle" style="font-size:12px;fill:#8d4f95">Z</text>
<text x="1412" y="124" text-anchor="middle" style="font-size:26px;font-weight:700;fill:#3e7fc1">?</text>

<!-- formula bar -->
<rect x="0.500" y="206.500" width="126" height="31" fill="#fff" stroke="#c6c6c6"/>
<text x="8" y="228" style="font-size:16px;fill:#333">M16</text><path d="M112 224h8l-4 4z" fill="#666"/>
<path fill="#aaa" d="M143.500 217h3v3h-3zM143.500 222h3v3h-3zM143.500 227h3v3h-3z"/>
<rect x="164.500" y="206.500" width="136" height="31" fill="#fff" stroke="#c6c6c6"/>
<path stroke="#bbb" stroke-width="2" d="M180 216l13 13M193 216l-13 13"/><path stroke="#bbb" stroke-width="2.500" fill="none" d="M225 223l5 6 9-12"/>
<text x="271" y="229" style="font-family:'Liberation Serif',serif;font-style:italic;font-weight:700;font-size:17px;fill:#666">fx</text>
<rect x="304.500" y="206.500" width="1602" height="31" fill="#fff" stroke="#c6c6c6"/>
<text x="319" y="229" style="font-size:18px;fill:#222">上海店</text>
<path d="M1890 220l5 4 5-4" fill="none" stroke="#666" stroke-width="2"/>

<!-- Sogou IME -->
<rect x="1685.500" y="443.500" width="222" height="29" fill="#f7f7f7" stroke="#bdbdbd"/>
<g transform="rotate(-10 1674 456)"><rect x="1659" y="441" width="31" height="31" rx="3" fill="#d76c1b"/><path d="M1660 446a4 4 0 0 1 4-4h22a3 3 0 0 1 3 3v8z" fill="#eb9a3e"/><path d="M1683 449h-12q-5 0-5 4t5 4h7q5 0 5 4t-5 4h-13" fill="none" stroke="#fff" stroke-width="4.500"/></g>
<text x="1707.500" y="465" text-anchor="middle" style="font-size:20px;font-weight:700;fill:#2b72c2">中</text>
<circle cx="1731" cy="452" r="2.500" fill="none" stroke="#2b72c2" stroke-width="1.300"/><path d="M1740 456c2 1 2 4-2 7" stroke="#2b72c2" stroke-width="2.500" fill="none"/>
<circle cx="1761.500" cy="458" r="9.500" fill="#fff" stroke="#2b72c2" stroke-width="2"/><circle cx="1758" cy="455" r="1.300" fill="#2b72c2"/><circle cx="1765" cy="455" r="1.300" fill="#2b72c2"/><path d="M1756 460c2 4 9 4 11 0" fill="none" stroke="#2b72c2" stroke-width="1.500"/>
<rect x="1787" y="447" width="7" height="14" rx="3.500" fill="#2b72c2"/><path d="M1784 456c0 9 13 9 13 0M1790.500 463v6M1786 469.500h9" fill="none" stroke="#2b72c2" stroke-width="1.500"/>
<rect x="1806" y="450" width="19" height="16" rx="2" fill="#2b72c2"/><path stroke="#fff" stroke-dasharray="2 1" d="M1808 454h15M1808 457.500h15"/><path stroke="#fff" stroke-width="1.500" d="M1810 461.500h11"/>
<circle cx="1841" cy="450" r="3.500" fill="#b9bfc5"/><path d="M1836 466v-6c0-3 2-5 5-5s5 2 5 5v6z" fill="#b9bfc5"/><rect x="1845" y="459" width="8" height="8" fill="#fff" stroke="#b9bfc5"/>
<path d="M1864 449l4 1h4l4-1 5 3-2 5-3-1v11h-12v-11l-3 1-2-5z" fill="#2b72c2"/>
<rect x="1889" y="449" width="7" height="7" rx="1" fill="#2b72c2"/><rect x="1898" y="449" width="8" height="7" rx="1" fill="#fff" stroke="#2b72c2" stroke-width="1.500"/><rect x="1889" y="458" width="7" height="8" rx="1" fill="#2b72c2"/><rect x="1898" y="458" width="8" height="8" rx="1" fill="#2b72c2"/>
</svg>
</body></html>
